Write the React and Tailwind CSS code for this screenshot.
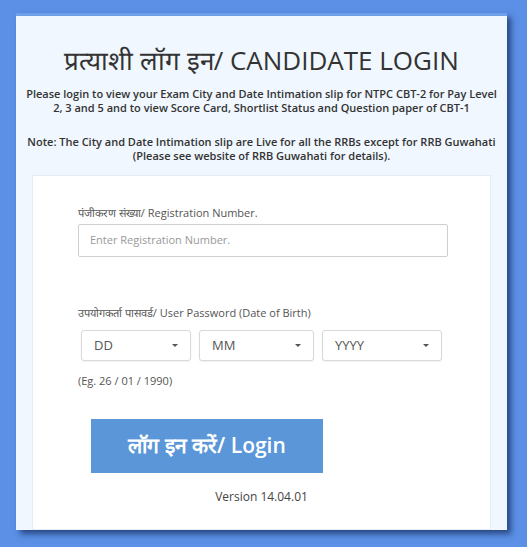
function Caret() {
  return <span className="inline-block w-0 h-0 border-l-[3px] border-r-[3px] border-t-[3px] border-l-transparent border-r-transparent border-t-[#555]" />
}

function DateSelect({ label, width }) {
  return (
    <div
      className={`flex items-center justify-between h-[31px] pl-3 pr-[12px] bg-white border border-[#d9d9d9] rounded-[3px] shadow-[0_1px_2px_rgba(0,0,0,0.06)] text-[13px] text-[#555] ${width}`}
    >
      <span>{label}</span>
      <Caret />
    </div>
  )
}

export default function App() {
  return (
    <div className="w-[527px] h-[547px] bg-[#5b90e6] pt-[13px] pl-[16px] font-['Open_Sans',sans-serif] overflow-hidden">
      <div className="w-[491px] h-[517px] bg-[#f0f7fe] border-t-[3px] border-[#6f9fe8] shadow-[4px_4px_6px_rgba(20,40,90,0.7)] flex flex-col">
        <h1 className="mt-[28px] text-center text-[26px] leading-[32px] text-[#333]">
          प्रत्याशी लॉग इन/ CANDIDATE LOGIN
        </h1>
        <p className="mt-[11px] px-[6px] text-center text-[11px] leading-[14px] font-semibold text-[#333]">
          Please login to view your Exam City and Date Intimation slip for NTPC CBT-2 for Pay Level 2, 3 and 5 and to view Score Card, Shortlist Status and Question paper of CBT-1
        </p>
        <p className="mt-[20px] px-[6px] text-center text-[11px] leading-[14px] font-semibold text-[#333]">
          Note: The City and Date Intimation slip are Live for all the RRBs except for RRB Guwahati (Please see website of RRB Guwahati for details).
        </p>
        <div className="mt-[12px] mx-[16px] flex-1 bg-white border border-[#e4edf5] pl-[45px] pt-[29px]">
          <div className="text-[11px] text-[#555]">पंजीकरण संख्या/ Registration Number.</div>
          <div className="mt-[2px] w-[370px] h-[33px] border border-[#cfcfcf] rounded-[2px] flex items-center px-[11px] text-[11px] text-[#999]">
            Enter Registration Number.
          </div>
          <div className="mt-[48px] text-[11px] text-[#555]">उपयोगकर्ता पासवर्ड/ User Password (Date of Birth)</div>
          <div className="mt-[9px] ml-[3px] flex gap-[8px]">
            <DateSelect label="DD" width="w-[110px]" />
            <DateSelect label="MM" width="w-[115px]" />
            <DateSelect label="YYYY" width="w-[120px]" />
          </div>
          <div className="mt-[12px] text-[11px] text-[#555]">(Eg. 26 / 01 / 1990)</div>
          <button className="mt-[29px] ml-[13px] w-[232px] h-[54px] bg-[#5a96d8] text-white text-[21px] font-semibold flex items-center justify-center">
            लॉग इन करें/ Login
          </button>
          <div className="mt-[15px] text-center pr-[45px] text-[12px] text-[#444]">Version 14.04.01</div>
        </div>
      </div>
    </div>
  )
}
